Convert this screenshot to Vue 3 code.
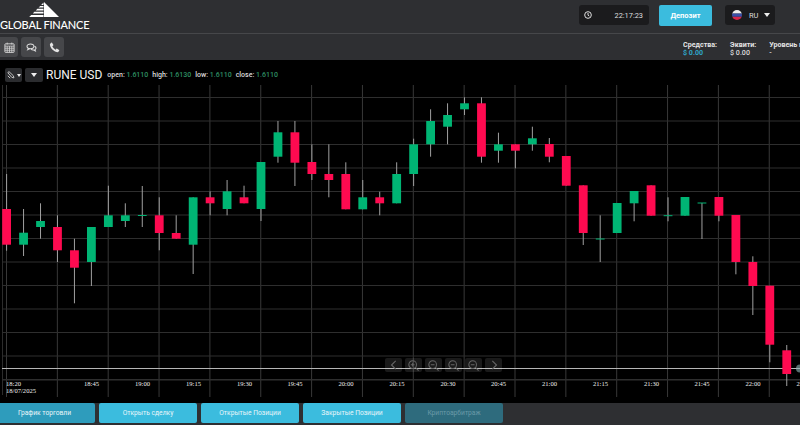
<script setup>
const G = 'g', R = 'r'
// [type, bodyTop, bodyBottom, wickTop, wickBottom]
const raw = [
  [R,209,244.7,174,250.7],[G,232.7,244.7,209,256],[G,221,227,203.3,238.7],[R,227,250.3,215.3,262],
  [R,250.3,267.7,238.7,303.3],[G,227,262,227,286],[G,215.3,227,185.7,227],[G,215.3,221,203.3,227],
  [G,215,216,186,227],[R,215.3,233,197.3,250.3],[R,233,238.7,215.3,238.7],[G,197.3,244.7,197.3,274],
  [R,197.3,203.3,191.3,215.3],[G,191.3,209,180,215.3],[R,197.3,203.3,185.7,203.3],[G,162,209,162,221],
  [G,132.3,156.7,121,162.7],[R,132.3,162.7,121,186],[R,162,174,144.3,180],[R,174,180,144.3,197.3],
  [R,174,209.3,162.3,209.3],[G,197.3,209.3,180,209.3],[R,197.3,203.3,191.7,215.3],[G,174,203.3,162.3,203.3],
  [G,144.3,174,138.7,186],[G,121,144.3,109.3,156.7],[G,115,126.7,103.3,144.3],[G,103.3,109.3,97.3,115],
  [R,103.3,156.7,97.3,162.7],[G,144.3,150.7,132.7,162.7],[R,144.3,150.7,144.3,168.3],[G,138.3,144.3,126.7,150.7],
  [R,144,156.7,138,162.3],[R,156,185.7,156,185.7],[R,185.3,233,185.3,245],[G,238.5,239.5,215.3,262],
  [G,203,233,203,233],[G,191,203.3,191,221.3],[R,185.3,215.7,185.3,215.7],[G,215.2,216.2,197.3,221.3],
  [G,197,215.7,197,215.7],[G,202.5,203.5,203,239],[R,197,215.7,197,221.3],[R,215,262,215,274.3],
  [R,262,286,256.3,315],[R,285.7,344.7,285.7,362.3],[R,350.3,374,345,386]
]
const candles = raw.map(([t, top, bottom, wt, wb], i) => ({
  id: i,
  fill: t === G ? '#00b574' : '#ff0a50',
  x: 6.6 + i * 16.96,
  top, h: bottom - top, wt, wb
}))
const hLines = Array.from({ length: 13 }, (_, i) => 97.5 + i * 23.5)
const vLines = Array.from({ length: 16 }, (_, i) => 6.5 + i * 50.85)
const times = [
  [91.5,'18:45'],[142.5,'19:00'],[193.5,'19:15'],[244.5,'19:30'],[295,'19:45'],[346,'20:00'],[397,'20:15'],
  [448,'20:30'],[498.5,'20:45'],[549.5,'21:00'],[600.5,'21:15'],[651.5,'21:30'],[702,'21:45'],[753,'22:00'],[804,'22:15']
]
const legend = [['open:','1.6110'],['high:','1.6130'],['low:','1.6110'],['close:','1.6110']]
const zooms = [true, false, false, false]
const tabs = [
  { label: 'График торговли', cls: 'first' },
  { label: 'Открыть сделку', cls: '' },
  { label: 'Открытые Позиции', cls: '' },
  { label: 'Закрытые Позиции', cls: '' },
  { label: 'Криптоарбитраж', cls: 'off' }
]
</script>

<template>
  <div class="page">
    <header class="top">
      <div class="logo">
        <svg class="mark" width="31" height="17" viewBox="0 0 31 17">
          <path d="M15 1 L30 16 L15 16 Z" fill="#fff"/>
          <path d="M14.5 1.6V4h-2.4zM11.2 5h3.3v1.6H9.6zM8.4 7.8h6.1v1.6H6.8zM5.4 10.8h9.1v1.6H3.8zM2.2 14h12.3v2H.2z" fill="#fff"/>
        </svg>
        <div class="brand">GLOBAL FINANCE</div>
      </div>
      <div class="top-right">
        <div class="clock">
          <svg width="8" height="8" viewBox="0 0 12 12" fill="none" stroke="#ddd" stroke-width="1.5">
            <circle cx="6" cy="6" r="5"/><path d="M6 3V6.3L8 7.6"/>
          </svg>
          <span>22:17:23</span>
        </div>
        <button class="deposit">Депозит</button>
        <div class="lang">
          <svg width="10" height="10" viewBox="0 0 14 14">
            <defs><clipPath id="fc"><circle cx="7" cy="7" r="7"/></clipPath></defs>
            <g clip-path="url(#fc)">
              <rect width="14" height="5" fill="#eee"/><rect y="5" width="14" height="4.5" fill="#3a4fa8"/><rect y="9.5" width="14" height="4.5" fill="#d8264a"/>
            </g>
          </svg>
          <span>RU</span>
          <i class="caret"></i>
        </div>
      </div>
    </header>

    <div class="sub">
      <div class="tools">
        <button class="tool first">
          <svg width="11" height="11" viewBox="0 0 12 12" fill="none" stroke="#ddd">
            <rect x="1" y="2" width="10" height="9.3" rx=".6"/><path d="M1 4.5h10M3.5.6v2.2M8.5.6v2.2M1 6.8h10M1 9h10M3.5 4.5v6.8M6 4.5v6.8M8.5 4.5v6.8" stroke-width=".8"/>
          </svg>
        </button>
        <button class="tool">
          <svg width="11" height="9" viewBox="0 0 14 12" fill="none" stroke="#ddd" stroke-width="1.4">
            <ellipse cx="5.6" cy="4.4" rx="4.6" ry="3.2"/><path d="M3 7l-1 2 2.6-1.2"/><path d="M11 4.2c1.4.6 2.2 1.6 2 2.8-.2.9-.8 1.4-1.4 1.8l.6 1.8-2.4-1.2c-1.4.1-2.6-.3-3.4-1.1"/>
          </svg>
        </button>
        <button class="tool">
          <svg width="11" height="11" viewBox="0 0 12 12">
            <path d="M2.5.8 1 2.1C.6 5.8 5.6 11.2 9.8 11.2l1.3-1.6c.2-.3.1-.6-.1-.8L8.9 7.3c-.3-.2-.6-.1-.8.1l-.9 1C5.9 7.8 4.2 6 3.6 4.7l1-.9c.2-.2.3-.5.1-.8L3.3.9C3.1.6 2.8.6 2.5.8Z" fill="#e4e4e4"/>
          </svg>
        </button>
      </div>
      <div class="stats">
        <div class="stat"><b>Средства:</b><span class="blue">$ 0.00</span></div>
        <div class="stat eq"><b>Эквити:</b><span>$ 0.00</span></div>
        <div class="stat lvl"><b>Уровень маржи:</b><span>-</span></div>
      </div>
    </div>

    <main class="chart">
      <svg class="plot" width="800" height="343" viewBox="0 60 800 343">
        <line x1="2.5" x2="2.5" y1="85" y2="395" stroke="#2c2c2c"/>
        <line v-for="x in vLines" :key="'v'+x" :x1="x" :x2="x" y1="85" y2="397" stroke="#383838"/>
        <line v-for="y in hLines" :key="'h'+y" x1="2" x2="800" :y1="y" :y2="y" stroke="#2e2e2e"/>
        <line x1="2" x2="800" y1="380" y2="380" stroke="#2e2e2e"/>
        <line x1="2" x2="800" y1="368.5" y2="368.5" stroke="#b5b5b5"/>
        <g v-for="c in candles" :key="c.id">
          <line :x1="c.x" :x2="c.x" :y1="c.wt" :y2="c.wb" stroke="#a0a0a0"/>
          <rect :x="c.x - 4.4" :y="c.top" width="8.8" :height="c.h" :fill="c.fill"/>
        </g>
        <circle cx="800" cy="368.5" r="4" fill="#8fb8b8" opacity=".6"/>
      </svg>

      <div class="legend">
        <button class="mini wide">
          <svg width="8" height="8" viewBox="0 0 10 10" fill="none" stroke="#ccc"><path d="M1 2 2.5.8 8 6 8.6 8.6 6 8 Z" stroke-width="1.2"/><path d="M1 6 4 9" stroke-width="1.2"/></svg>
          <i class="caret small"></i>
        </button>
        <button class="mini"><i class="caret"></i></button>
        <span class="sym">RUNE USD</span>
        <span v-for="l in legend" :key="l[0]" class="pair">{{ l[0] }} <em>{{ l[1] }}</em></span>
      </div>

      <div class="zoom">
        <button class="z">
          <svg width="10" height="10" viewBox="0 0 12 12" fill="none" stroke="#666" stroke-width="1.3"><path d="M8 1 3 6l5 5"/></svg>
        </button>
        <button v-for="(plus, i) in zooms" :key="i" class="z">
          <svg width="11" height="11" viewBox="0 0 13 13" fill="none" stroke="#666" stroke-width="1.2">
            <circle cx="5.5" cy="5.5" r="4.5"/><path d="M8.7 8.7 12.5 12.5M3.3 5.5h4.4"/><path v-if="plus" d="M5.5 3.3v4.4"/>
          </svg>
        </button>
        <button class="z">
          <svg width="10" height="10" viewBox="0 0 12 12" fill="none" stroke="#666" stroke-width="1.3"><path d="M4 1l5 5-5 5"/></svg>
        </button>
      </div>

      <div class="date-label">18:20<br>18/07/2025</div>
      <span v-for="t in times" :key="t[1]" class="time" :style="{ left: t[0] + 'px' }">{{ t[1] }}</span>
    </main>

    <nav class="tabs">
      <button v-for="t in tabs" :key="t.label" class="tab" :class="t.cls">{{ t.label }}</button>
    </nav>
  </div>
</template>

<style scoped>
.page { width: 800px; height: 425px; display: flex; flex-direction: column; background: #2e2f32; overflow: hidden; font-family: "Roboto", "Liberation Sans", sans-serif; color: #fff; }
button { border: 0; padding: 0; font-family: inherit; cursor: pointer; }
.top { height: 33px; flex: none; display: flex; justify-content: space-between; border-bottom: 1px solid #46474a; }
.logo { width: 90px; display: flex; flex-direction: column; align-items: flex-start; }
.mark { margin: 1px 0 0 29px; display: block; }
.brand { font: 500 11px/12px "Lato", sans-serif; letter-spacing: -.2px; white-space: nowrap; margin-top: 1px; }
.top-right { display: flex; align-items: flex-start; padding-top: 5px; padding-right: 25px; }
.clock { width: 70px; height: 20px; margin-right: 10px; background: #1b1b1d; border-radius: 3px; display: flex; align-items: center; justify-content: space-between; padding: 0 6px 0 5px; box-sizing: border-box; font-size: 7.4px; color: #ddd; }
.deposit { width: 53px; height: 21px; background: #3bbcde; color: #fff; font-size: 7.5px; font-weight: 700; border-radius: 2px; margin-right: 13px; }
.lang { width: 50px; height: 20px; background: #1b1b1d; border-radius: 3px; display: flex; align-items: center; padding-left: 7px; box-sizing: border-box; font-size: 7.5px; color: #ddd; }
.lang span { margin: 0 5px 0 7px; }
.caret { width: 0; height: 0; border-left: 3.5px solid transparent; border-right: 3.5px solid transparent; border-top: 4px solid #eee; display: inline-block; }
.caret.small { border-left-width: 2.5px; border-right-width: 2.5px; border-top-width: 3px; margin-left: 2px; }
.sub { height: 26px; flex: none; display: flex; justify-content: space-between; }
.tools { display: flex; gap: 3px; padding-top: 3px; }
.tool { width: 20px; height: 20px; background: #46474a; border-radius: 3px; display: flex; align-items: center; justify-content: center; }
.tool.first { width: 18px; border-radius: 0 3px 3px 0; }
.stats { display: flex; width: 117px; flex: none; font-size: 7.1px; line-height: 8px; padding-top: 7px; white-space: nowrap; overflow: hidden; }
.stat { display: flex; flex-direction: column; color: #ddd; }
.stat b { font-weight: 700; color: #e4e4e4; }
.stat span { font-weight: 500; }
.stat .blue { color: #2fa6c8; font-weight: 700; }
.eq { margin-left: 13px; }
.lvl { margin-left: 13px; }
.chart { position: relative; height: 343px; flex: none; background: #000; overflow: hidden; }
.plot { position: absolute; left: 0; top: 0; display: block; }
.legend { position: absolute; left: 5px; top: 8px; display: flex; align-items: center; font-size: 7px; color: #ddd; white-space: nowrap; }
.mini { height: 14px; width: 18px; background: #2b2c2f; border-radius: 2px; margin-right: 3px; display: flex; align-items: center; justify-content: center; }
.mini.wide { width: 17px; }
.sym { font-size: 12px; color: #f2f2f2; margin: 0 5px 0 0; }
.pair { margin-right: 4px; font-weight: 500; }
.pair em { font-style: normal; color: #2e8f63; }
.zoom { position: absolute; left: 385px; top: 298px; display: flex; gap: 3px; }
.z { width: 17px; height: 14px; background: rgba(255, 255, 255, .1); border-radius: 2px; display: flex; align-items: center; justify-content: center; }
.date-label { position: absolute; left: 6px; top: 320px; font: 400 6.6px/7px "Liberation Serif", serif; color: #eee; }
.time { position: absolute; top: 320px; transform: translateX(-50%); font: 400 6.6px/7px "Liberation Serif", serif; color: #eee; }
.tabs { height: 22px; flex: none; display: flex; gap: 4px; }
.tab { width: 98px; height: 20px; background: #3bbcde; color: #e8f6fa; font-size: 6.7px; border-radius: 2px; font-weight: 400; }
.tab.first { width: 95px; background: #2e9cbc; border-radius: 0 2px 2px 0; padding-right: 6px; }
.tab.off { background: #2e6b7d; color: #6a9aa8; }
</style>
